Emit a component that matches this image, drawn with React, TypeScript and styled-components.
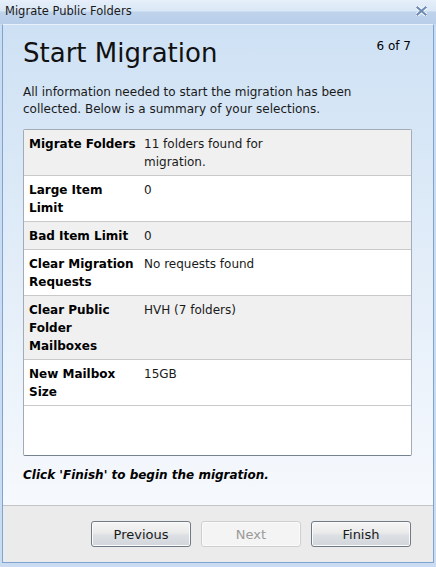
import React from "react";
import styled, { createGlobalStyle } from "styled-components";

const Global = createGlobalStyle`
  html, body { margin: 0; padding: 0; }
  body { font-family: "DejaVu Sans", Verdana, sans-serif; font-size: 12px; color: #000; }
`;

const Window = styled.div`
  width: 436px;
  height: 567px;
  display: flex;
  flex-direction: column;
  background: #c9dcf1;
  box-sizing: border-box;
  overflow: hidden;
`;

const TitleBar = styled.div`
  height: 24px;
  flex: none;
  display: flex;
  align-items: center;
  justify-content: space-between;
  padding: 0 9px 2px 5px;
  box-sizing: border-box;
  background: linear-gradient(#e6effa 0px, #dae7f6 11px, #bfd3ec 12px, #b9cee9 24px);
  font-family: "DejaVu Sans", Tahoma, sans-serif;
  font-size: 11.5px;
  color: #1a1a1a;
`;

const Panel = styled.div`
  flex: 1;
  margin: 0 2px 4px 2px;
  border: 1px solid #7fa4d0;
  border-top-color: #e9f1fa;
  box-shadow: inset 1px 0 0 #f3f8fd, inset -1px 0 0 #f3f8fd;
  display: flex;
  flex-direction: column;
  min-height: 0;
`;

const Content = styled.div`
  flex: 1;
  display: flex;
  flex-direction: column;
  padding: 12px 21px 0 20px;
  background: linear-gradient(#cee1f4, #f6f9fd);
`;

const Header = styled.div`
  display: flex;
  justify-content: space-between;
  align-items: flex-start;
`;

const Heading = styled.h1`
  margin: 0;
  font-size: 26px;
  font-weight: normal;
  line-height: 32px;
  color: #111;
`;

const Step = styled.div`
  font-size: 12px;
  margin-top: 2px;
  margin-right: 1px;
`;

const Intro = styled.p`
  margin: 15px 0 11px;
  font-size: 12px;
  line-height: 17px;
  color: #1a1a1a;
`;

const Summary = styled.div`
  height: 327px;
  box-sizing: border-box;
  border: 1px solid #a3acb6;
  border-bottom-color: #75828f;
  border-radius: 2px;
  background: #fff;
  flex: none;
`;

const Row = styled.div<{ $shade: boolean }>`
  display: grid;
  grid-template-columns: 115px 150px;
  padding: 5px 5px 4px;
  border-bottom: 1px solid #c9c9c9;
  background: ${(p) => (p.$shade ? "#f0f0f0" : "#ffffff")};
  line-height: 18px;
`;

const Label = styled.div`
  font-weight: bold;
  padding-right: 4px;
`;

const Value = styled.div`
  color: #1a1a1a;
`;

const Note = styled.p`
  margin: 10px 0 0;
  font-weight: bold;
  font-style: italic;
  font-size: 12px;
  line-height: 18px;
`;

const Footer = styled.div`
  flex: none;
  height: 57px;
  box-sizing: border-box;
  border-top: 1px solid #c3c3c3;
  background: #ebebeb;
  display: flex;
  justify-content: flex-end;
  align-items: flex-start;
  gap: 10px;
  padding: 15px 22px 0 0;
`;

const Button = styled.button<{ $disabled?: boolean }>`
  width: 100px;
  height: 26px;
  border-radius: 3px;
  font-family: "DejaVu Sans", Verdana, sans-serif;
  font-size: 13px;
  padding: 0;
  border: 1px solid ${(p) => (p.$disabled ? "#cfcfcf" : "#707a85")};
  color: ${(p) => (p.$disabled ? "#9a9a9a" : "#1a1a1a")};
  background: ${(p) =>
    p.$disabled
      ? "#f4f4f4"
      : "linear-gradient(#f6f6f6 0%, #eaeaea 45%, #dcdfe3 55%, #d2d6dc 100%)"};
  box-shadow: inset 0 0 0 1px ${(p) => (p.$disabled ? "#fafafa" : "#fbfbfb")};
`;

const rows: [string, string][] = [
  ["Migrate Folders", "11 folders found for migration."],
  ["Large Item Limit", "0"],
  ["Bad Item Limit", "0"],
  ["Clear Migration Requests", "No requests found"],
  ["Clear Public Folder Mailboxes", "HVH (7 folders)"],
  ["New Mailbox Size", "15GB"],
];

const CloseIcon = () => (
  <svg width="11" height="10" viewBox="0 0 11 10">
    <path d="M1.5 1.5 L9.5 8.5 M9.5 1.5 L1.5 8.5" stroke="#ffffff" strokeWidth="4" strokeLinecap="round" />
    <path d="M1.5 1.5 L9.5 8.5 M9.5 1.5 L1.5 8.5" stroke="#6f8db4" strokeWidth="2.2" strokeLinecap="square" />
  </svg>
);

export default function App() {
  return (
    <>
      <Global />
      <Window>
        <TitleBar>
          <span>Migrate Public Folders</span>
          <CloseIcon />
        </TitleBar>
        <Panel>
          <Content>
            <Header>
              <Heading>Start Migration</Heading>
              <Step>6 of 7</Step>
            </Header>
            <Intro>
              All information needed to start the migration has been collected. Below is a summary of your
              selections.
            </Intro>
            <Summary>
              {rows.map(([l, v], i) => (
                <Row key={l} $shade={i % 2 === 0}>
                  <Label>{l}</Label>
                  <Value>{v}</Value>
                </Row>
              ))}
            </Summary>
            <Note>Click 'Finish' to begin the migration.</Note>
          </Content>
          <Footer>
            <Button>Previous</Button>
            <Button $disabled>Next</Button>
            <Button>Finish</Button>
          </Footer>
        </Panel>
      </Window>
    </>
  );
}
